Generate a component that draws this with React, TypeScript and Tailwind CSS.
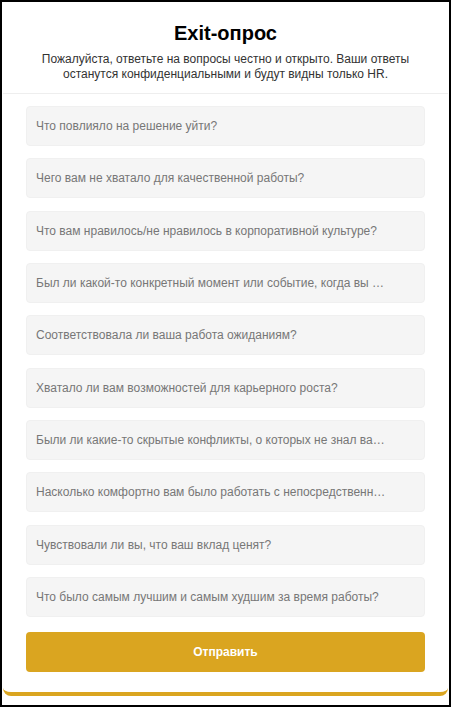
import React from "react";

const questions = [
  "Что повлияло на решение уйти?",
  "Чего вам не хватало для качественной работы?",
  "Что вам нравилось/не нравилось в корпоративной культуре?",
  "Был ли какой-то конкретный момент или событие, когда вы решили уйти?",
  "Соответствовала ли ваша работа ожиданиям?",
  "Хватало ли вам возможностей для карьерного роста?",
  "Были ли какие-то скрытые конфликты, о которых не знал ваш руководитель?",
  "Насколько комфортно вам было работать с непосредственным руководителем?",
  "Чувствовали ли вы, что ваш вклад ценят?",
  "Что было самым лучшим и самым худшим за время работы?",
];

export default function App() {
  return (
    <div
      className="w-[451px] h-[707px] bg-white border-2 border-black overflow-hidden"
      style={{ fontFamily: '"Liberation Sans", Arial, sans-serif' }}
    >
      <div className="bg-white rounded-b-lg border-b-4 border-[#daa520] mx-px">
        <div className="pt-[19px] pb-[11px] px-5 text-center border-b border-[#eeeeee]">
          <h1 className="text-[20px] leading-[24px] font-bold text-black">Exit-опрос</h1>
          <p className="mt-[7px] text-[12px] leading-[15px] text-[#333333]">
            Пожалуйста, ответьте на вопросы честно и открыто. Ваши ответы
            <br />
            останутся конфиденциальными и будут видны только HR.
          </p>
        </div>
        <div className="px-[23px] pt-[12px] pb-[20px] flex flex-col">
          <div className="flex flex-col gap-[12.33px]">
            {questions.map((q) => (
              <input
                key={q}
                type="text"
                placeholder={q}
                className="h-10 w-full rounded bg-[#f5f5f5] border border-[#f0f0f0] pl-[9px] pr-[36px] text-[12px] text-[#333] placeholder:text-[#777777] text-ellipsis outline-none"
              />
            ))}
          </div>
          <button className="mt-[15px] h-10 w-full rounded bg-[#daa520] text-white text-[12px] font-bold">
            Отправить
          </button>
        </div>
      </div>
    </div>
  );
}
